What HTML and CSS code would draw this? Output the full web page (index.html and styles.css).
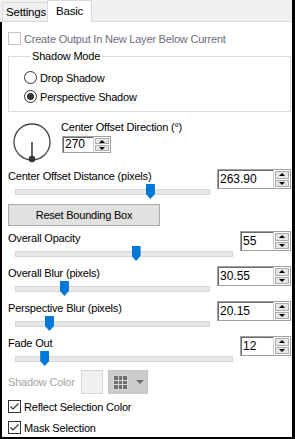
FILE: index.html
```html
<!DOCTYPE html>
<html lang="en">
<head>
  <meta charset="UTF-8" />
  <title>Basic</title>
  <link rel="stylesheet" href="styles.css">
</head>
<body>
<div class="window">
  <div class="tabs">
    <div class="tab">Settings</div>
    <div class="tab tab-active">Basic</div>
  </div>

  <div class="panel">
    <div class="check disabled"><span class="box"></span>Create Output In New Layer Below Current</div>

    <fieldset class="group">
      <legend>Shadow Mode</legend>
      <div class="radio"><span class="dot"></span>Drop Shadow</div>
      <div class="radio checked"><span class="dot"></span>Perspective Shadow</div>
    </fieldset>

    <div class="dir-row">
      <svg class="dial" width="40" height="40" viewBox="0 0 40 40">
        <circle cx="20" cy="19" r="18" fill="none" stroke="#474747" stroke-width="1.3"/>
        <line x1="20" y1="19" x2="20" y2="36" stroke="#555" stroke-width="1.8"/>
        <circle cx="20" cy="36" r="3.3" fill="#333"/>
      </svg>
      <div class="dir-col">
        <div class="label">Center Offset Direction (°)</div>
        <div class="spin spin-dir">
          <span class="spin-text">270</span>
          <span class="spin-btns"><span class="spin-btn up"></span><span class="spin-btn down"></span></span>
        </div>
      </div>
    </div>

    <div class="field first">
      <div class="label">Center Offset Distance (pixels)</div>
      <div class="spin">
        <span class="spin-text">263.90</span>
        <span class="spin-btns"><span class="spin-btn up"></span><span class="spin-btn down"></span></span>
      </div>
      <div class="slider"><div class="track"><div class="thumb" style="left:69.2%"></div></div></div>
    </div>

    <button class="btn">Reset Bounding Box</button>

    <div class="field narrow">
      <div class="label">Overall Opacity</div>
      <div class="spin">
        <span class="spin-text">55</span>
        <span class="spin-btns"><span class="spin-btn up"></span><span class="spin-btn down"></span></span>
      </div>
      <div class="slider"><div class="track"><div class="thumb" style="left:55.3%"></div></div></div>
    </div>

    <div class="field">
      <div class="label">Overall Blur (pixels)</div>
      <div class="spin">
        <span class="spin-text">30.55</span>
        <span class="spin-btns"><span class="spin-btn up"></span><span class="spin-btn down"></span></span>
      </div>
      <div class="slider"><div class="track"><div class="thumb" style="left:25.1%"></div></div></div>
    </div>

    <div class="field">
      <div class="label">Perspective Blur (pixels)</div>
      <div class="spin">
        <span class="spin-text">20.15</span>
        <span class="spin-btns"><span class="spin-btn up"></span><span class="spin-btn down"></span></span>
      </div>
      <div class="slider"><div class="track"><div class="thumb" style="left:17.4%"></div></div></div>
    </div>

    <div class="field narrow">
      <div class="label">Fade Out</div>
      <div class="spin">
        <span class="spin-text">12</span>
        <span class="spin-btns"><span class="spin-btn up"></span><span class="spin-btn down"></span></span>
      </div>
      <div class="slider"><div class="track"><div class="thumb" style="left:13.4%"></div></div></div>
    </div>

    <div class="color-row">
      <span class="color-label">Shadow Color</span>
      <span class="swatch"></span>
      <span class="picker">
        <svg width="15" height="15" viewBox="0 0 15 15">
          <rect x="0" y="0" width="15" height="15" fill="#d6d6d6"/>
          <rect x="1" y="1" width="4" height="4" fill="#6f6f6f"/>
          <rect x="6" y="1" width="3" height="4" fill="#6f6f6f"/>
          <rect x="10" y="1" width="4" height="4" fill="#6f6f6f"/>
          <rect x="1" y="6" width="4" height="3" fill="#6f6f6f"/>
          <rect x="6" y="6" width="3" height="3" fill="#6f6f6f"/>
          <rect x="10" y="6" width="4" height="3" fill="#6f6f6f"/>
          <rect x="1" y="10" width="4" height="4" fill="#6f6f6f"/>
          <rect x="6" y="10" width="3" height="4" fill="#6f6f6f"/>
          <rect x="10" y="10" width="4" height="4" fill="#6f6f6f"/>
        </svg>
        <span class="caret"></span>
      </span>
    </div>

    <div class="check checked reflect"><span class="box"><svg width="11" height="11" viewBox="0 0 11 11"><polyline points="1.5,5.5 4,8 9.5,2.5" fill="none" stroke="#333" stroke-width="1.2"/></svg></span>Reflect Selection Color</div>
    <div class="check checked mask"><span class="box"><svg width="11" height="11" viewBox="0 0 11 11"><polyline points="1.5,5.5 4,8 9.5,2.5" fill="none" stroke="#333" stroke-width="1.2"/></svg></span>Mask Selection</div>
  </div>
</div>
</body>
</html>
```

FILE: styles.css
```css
* {
  box-sizing: border-box;
}
body {
  margin: 0;
  font-family: "Liberation Sans", Arial, sans-serif;
  font-size: 11px;
  letter-spacing: -0.2px;
  color: #000;
  background: #fff;
}
.window {
  width: 295px;
  height: 439px;
  display: flex;
  flex-direction: column;
  border-right: 3px solid #000;
  border-bottom: 2px solid #000;
  background: #fff;
}
.tabs {
  display: flex;
  align-items: flex-end;
  height: 22px;
  padding-left: 2px;
  background: #f0f0f0;
  border-bottom: 1px solid #d9d9d9;
}
.tab {
  width: 46px;
  height: 19px;
  border: 1px solid #d9d9d9;
  border-bottom: 0;
  padding-left: 3px;
  line-height: 19px;
  font-size: 11.5px;
  white-space: nowrap;
}
.tab-active {
  width: 45px;
  height: 22px;
  margin-left: -1px;
  margin-bottom: -1px;
  padding-left: 8px;
  line-height: 20px;
  background: #fff;
}
.panel {
  flex: 1;
  display: flex;
  flex-direction: column;
  border-left: 2px solid #000;
  padding: 10px 1px 0 6px;
}

/* checkboxes and radios */
.check {
  display: flex;
  align-items: center;
  height: 13px;
}
.box {
  width: 13px;
  height: 13px;
  border: 1px solid #333;
  background: #fff;
  margin-right: 3px;
  display: flex;
  align-items: center;
  justify-content: center;
}
.check.disabled {
  color: #6d6d7d;
}
.check.disabled .box {
  border-color: #c4c4c4;
}
.reflect {
  margin-top: 5px;
  height: 15px;
}
.mask {
  margin-top: 6px;
  height: 15px;
}
.group {
  margin: 5px 0 0;
  padding: 5px 0 5px 15px;
  border: 1px solid #dcdcdc;
  min-width: 0;
}
.group legend {
  margin-left: 6px;
  padding: 0 2px;
  line-height: 13px;
}
.radio {
  display: flex;
  align-items: center;
  height: 19px;
}
.dot {
  width: 13px;
  height: 13px;
  border: 1px solid #333;
  border-radius: 50%;
  margin-right: 3px;
  display: flex;
  align-items: center;
  justify-content: center;
}
.radio.checked .dot::after {
  content: "";
  width: 7px;
  height: 7px;
  border-radius: 50%;
  background: #333;
}

/* direction */
.dir-row {
  display: flex;
  margin-top: 8px;
}
.dial {
  margin: 3px 0 0 4px;
}
.dir-col {
  margin-left: 9px;
}
.dir-col .label {
  line-height: 14px;
}

/* spinners */
.spin {
  display: flex;
  height: 20px;
  border: 1px solid #a0a0a0;
  background: #fff;
  font-size: 12px;
  letter-spacing: 0;
}
.spin-text {
  flex: 1;
  border-top: 1px solid #6b6b6b;
  border-left: 1px solid #6b6b6b;
  padding-left: 1px;
  line-height: 16px;
}
.spin-btns {
  width: 17px;
  display: flex;
  flex-direction: column;
  gap: 1px;
  padding: 1px;
  border-left: 1px solid #d0d0d0;
}
.spin-btn {
  flex: 1;
  background: #e6e6e6;
  border: 1px solid #acacac;
  display: flex;
  align-items: center;
  justify-content: center;
}
.spin-btn::after {
  content: "";
  border-left: 3.5px solid transparent;
  border-right: 3.5px solid transparent;
}
.up::after {
  border-bottom: 3px solid #000;
}
.down::after {
  border-top: 3px solid #000;
}
.spin-dir {
  width: 49px;
  height: 17px;
  margin: 2px 0 0 1px;
}
.spin-dir .spin-text {
  line-height: 13px;
}

/* slider fields */
.field {
  display: grid;
  grid-template-columns: 1fr 74px;
  grid-template-rows: 15px 15px;
  margin-top: 5px;
}
.field.first {
  margin-top: 6px;
}
.field.narrow {
  grid-template-columns: 1fr 51px;
}
.field .label {
  grid-column: 1;
  grid-row: 1;
  line-height: 15px;
}
.field .spin {
  grid-column: 2;
  grid-row: 1 / span 2;
  align-self: start;
}
.slider {
  grid-column: 1;
  grid-row: 2;
  padding: 0 7px;
}
.track {
  position: relative;
  height: 15px;
}
.track::before {
  content: "";
  position: absolute;
  left: 0;
  right: 0;
  top: 5px;
  height: 4px;
  background: #e7e7e7;
  border: 1px solid #d6d6d6;
}
.thumb {
  position: absolute;
  top: 0;
  width: 9px;
  height: 15px;
  margin-left: -4px;
  background: #0078d7;
  clip-path: polygon(0 0, 100% 0, 100% 66%, 50% 100%, 0 66%);
}

.btn {
  align-self: flex-start;
  width: 152px;
  height: 22px;
  margin-top: 5px;
  padding: 0;
  background: #e1e1e1;
  border: 1px solid #adadad;
  font-family: inherit;
  font-size: 11px;
  letter-spacing: -0.2px;
  color: #000;
}

/* shadow colour */
.color-row {
  display: flex;
  align-items: center;
  height: 24px;
  margin-top: 4px;
}
.color-label {
  width: 73px;
  color: #a3a3a3;
}
.swatch {
  width: 22px;
  height: 24px;
  background: #f0f0f0;
  border: 1px solid #d5d5d5;
}
.picker {
  width: 40px;
  height: 24px;
  margin-left: 5px;
  background: #cccccc;
  border: 1px solid #c4c4c4;
  display: flex;
  align-items: center;
  padding-left: 4px;
}
.caret {
  margin-left: 8px;
  border-left: 4px solid transparent;
  border-right: 4px solid transparent;
  border-top: 4px solid #6f6f6f;
}
```
